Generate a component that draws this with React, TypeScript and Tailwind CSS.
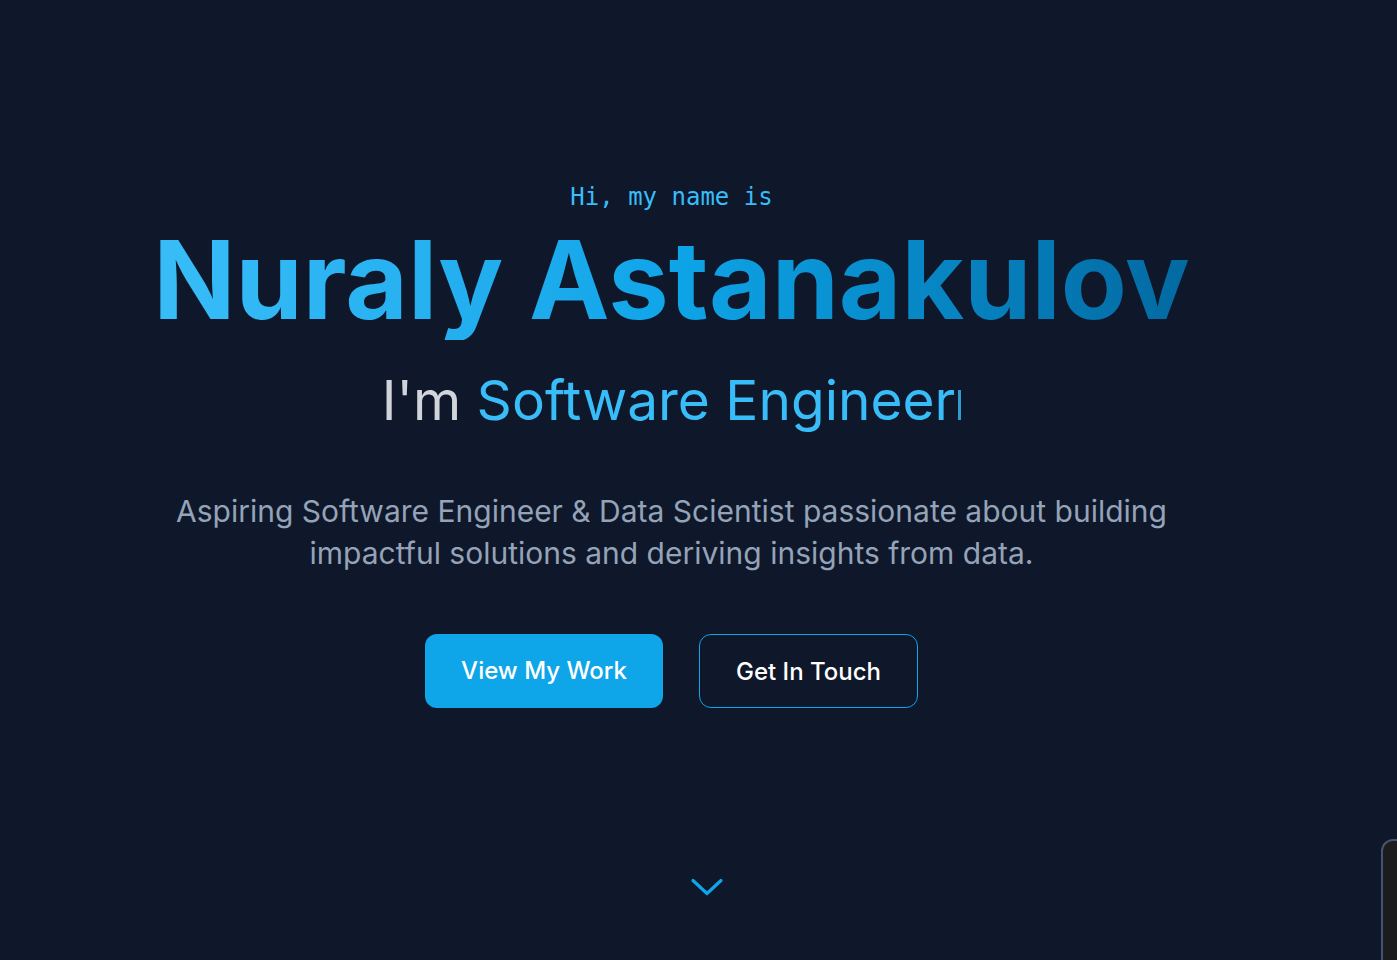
const ScrollHint = (): React.JSX.Element => (
  <svg width="34" height="20" viewBox="0 0 34 20" fill="none" className="text-[#0ea5e9]">
    <path d="M3 3.5 L17 16.5 L31 3.5" stroke="currentColor" strokeWidth="3.2" strokeLinecap="round" strokeLinejoin="round" />
  </svg>
);

const App = (): React.JSX.Element => {
  return (
    <div className="relative min-h-screen overflow-hidden bg-[#0f172a] font-['Inter',sans-serif]">
      <section className="flex w-[1343px] flex-col items-center pt-[180px] text-center">
        <p className="font-['DejaVu_Sans_Mono',monospace] text-[24px] leading-[34px] text-[#38bdf8]">
          Hi, my name is
        </p>
        <h1 className="mt-[6px] bg-gradient-to-r from-[#38bdf8] via-[#0ea5e9] to-[#0369a1] bg-clip-text text-[108px] font-bold leading-[120px] text-transparent">
          Nuraly Astanakulov
        </h1>
        <div className="mt-[28px] flex items-center text-[55px] leading-[64px]">
          <span className="text-[#d1d5db]">I'm&nbsp;</span>
          <span className="text-[#38bdf8]">Software Engineer</span>
          <span className="ml-[3px] mt-[10px] h-[30px] w-[3px] bg-[#38bdf8]/80" />
        </div>
        <p className="mt-[58px] max-w-[1000px] text-[30px] leading-[42px] text-[#94a3b8]">
          Aspiring Software Engineer &amp; Data Scientist passionate about building impactful solutions and deriving insights from data.
        </p>
        <div className="mt-[60px] flex items-center gap-9">
          <button className="h-[74px] w-[238px] rounded-xl bg-[#0ea5e9] text-[24px] font-medium text-white">
            View My Work
          </button>
          <button className="h-[74px] w-[219px] rounded-xl border border-[#0ea5e9] pt-[2px] text-[24px] font-medium text-white">
            Get In Touch
          </button>
        </div>
        <div className="ml-[70px] mt-[169px]">
          <ScrollHint />
        </div>
      </section>
      <div className="absolute left-[1381px] top-[839px] h-[200px] w-[60px] rounded-xl border-2 border-slate-600 bg-[#1c1c1e]" />
    </div>
  );
};

export default App;
